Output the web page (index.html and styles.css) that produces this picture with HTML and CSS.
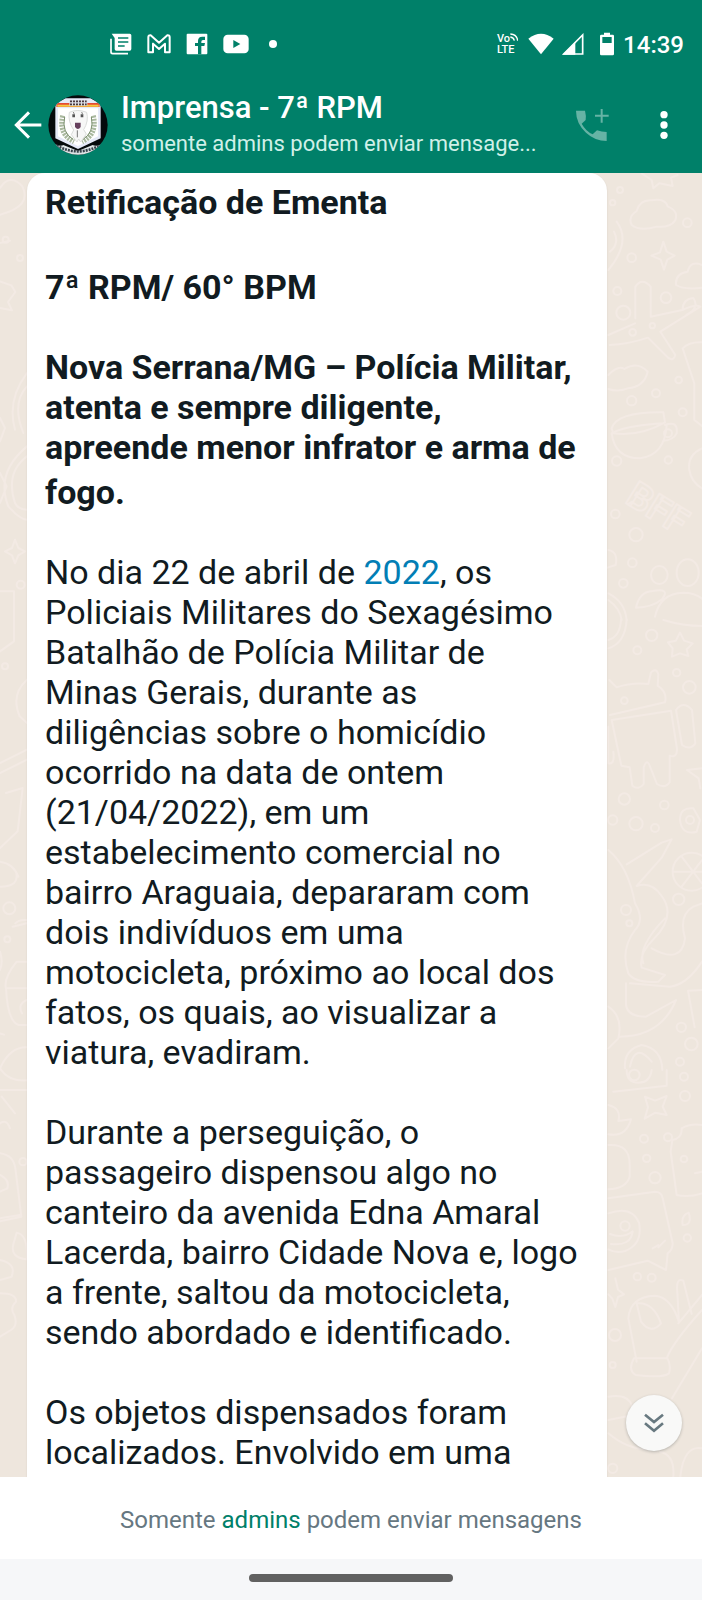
FILE: index.html
```html
<!DOCTYPE html>
<html lang="pt-BR">
<head>
<meta charset="utf-8">
<meta name="viewport" content="width=device-width, initial-scale=1">
<title>Imprensa - 7ª RPM</title>
<link rel="stylesheet" href="styles.css">
</head>
<body>
<header class="header">
  <div class="status">
    <div class="status-left">
      <svg width="22" height="22" viewBox="0 0 66 66" aria-hidden="true"><path d="M5 2h54q5 0 5 5v41q0 5-5 5H19q-5 0-5-5V15z" fill="#fff"/><path d="M24 15h31M24 27h31M24 39h20" stroke="#008069" stroke-width="5"/><path d="M3 17v40q0 5 5 5h46" fill="none" stroke="#fff" stroke-width="5"/></svg>
      <svg width="24" height="20" viewBox="0 0 72 60" aria-hidden="true"><path d="M4 55V9q0-6 7-5l25 22L61 4q7-1 7 5v46H54V29L36 45 18 29v26z" fill="none" stroke="#fff" stroke-width="6" stroke-linejoin="round"/></svg>
      <svg width="22" height="22" viewBox="0 0 66 66" aria-hidden="true"><rect x="2" y="2" width="62" height="62" rx="3" fill="#fff"/><path d="M36 64V39h-9v-9h9v-6q0-13 13-13h8v10h-6q-5 0-5 5v4h11l-2 9h-9v25z" fill="#008069"/></svg>
      <svg width="26" height="20" viewBox="0 0 78 60" aria-hidden="true"><rect x="1" y="2" width="76" height="56" rx="13" fill="#fff"/><path d="M31 18v24l21-12z" fill="#008069"/></svg>
      <svg class="more-dot" width="8" height="8" viewBox="0 0 8 8" aria-hidden="true"><circle cx="4" cy="4" r="4" fill="#fff"/></svg>
    </div>
    <div class="status-right">
      <div class="volte"><span>Vo<svg width="8" height="8" viewBox="0 0 24 24" aria-hidden="true"><path d="M1 3q20 1 22 20M1 12q10 1 12 11" fill="none" stroke="#fff" stroke-width="4"/></svg></span><span>LTE</span></div>
      <svg class="wifi" width="26" height="22" viewBox="0 0 78 66" aria-hidden="true"><path d="M1 17Q39-13 77 17L39 64z" fill="#fff"/></svg>
      <svg class="signal" width="22" height="22" viewBox="0 0 66 66" aria-hidden="true"><path d="M5 63L62 6v57z" fill="none" stroke="#fff" stroke-width="5"/><path d="M2 65l38-38v38z" fill="#fff"/></svg>
      <svg class="battery" width="16" height="24" viewBox="0 0 48 72" aria-hidden="true"><path d="M15 2h18v6h8q4 0 4 4v54q0 4-4 4H7q-4 0-4-4V12q0-4 4-4h8z" fill="#fff"/><path d="M10 15h28v18H10z" fill="#008069"/></svg>
      <time class="clock">14:39</time>
    </div>
  </div>
  <div class="appbar">
    <button class="icon-button back" aria-label="Voltar"><svg width="28" height="28" viewBox="0 0 84 84" aria-hidden="true"><path d="M82 42H7M45 4L7 42l38 38" fill="none" stroke="#fff" stroke-width="9"/></svg></button>
    <svg class="avatar" width="60" height="60" viewBox="0 0 180 180" role="img" aria-label="Brasão da 7ª RPM">
      <defs><clipPath id="round"><circle cx="90" cy="90" r="89"/></clipPath></defs>
      <g clip-path="url(#round)">
        <path d="M0 0h180v180H0z" fill="#050a0c"/>
        <path d="M8 142q28 15 38 8l44 18 44-18q13 7 38-8v38H8z" fill="#dfe5e7"/>
        <path d="M26 152q64 34 128 0" fill="none" stroke="#39434c" stroke-width="8" stroke-dasharray="6 3"/>
        <path d="M22 22q12 0 30-12h76q18 12 30 12v108l-68 32-68-32z" fill="#e5e9f7"/>
        <path d="M30 40h120v84l-60 29-60-29z" fill="#fff"/>
        <path d="M25 24h130v12H25z" fill="#e54a35"/><path d="M28 29h124v6H28z" fill="#f5c840"/>
        <path d="M64 15h54v17H64z" fill="#dbdde4"/><path d="M66 19h50M66 28h50" stroke="#4a3840" stroke-width="5" stroke-dasharray="6 3"/>
        <path d="M44 62q-13 56 34 78M136 62q13 56-34 78" fill="none" stroke="#a9b89e" stroke-width="15" stroke-dasharray="6 3"/>
        <path d="M50 66q-10 46 26 68M130 66q10 46-26 68" fill="none" stroke="#7c9070" stroke-width="3"/>
        <path d="M64 52q-5 27 13 53l-7 14 17 22 5-9 6 9 17-24-8-13q16-26 9-52-27-11-52 0z" fill="#f7f7f7" stroke="#dadcda" stroke-width="3"/>
        <path d="M73 58h8v9h-8zM98 58h8v9h-8z" fill="#555"/><path d="M76 51l3 7M101 51l3 7" stroke="#888" stroke-width="3"/>
        <path d="M81 83h17v13q-8 12-17 0z" fill="#66405d"/><path d="M88 106v21" stroke="#777" stroke-width="3"/>
      </g>
    </svg>
    <div class="heading">
      <h1 class="group-name">Imprensa - 7ª RPM</h1>
      <p class="group-info">somente admins podem enviar mensage...</p>
    </div>
    <button class="icon-button call" aria-label="Ligar para o grupo" disabled><svg width="34" height="34" viewBox="0 0 102 102" aria-hidden="true"><path d="M3 8h27q4 16 2 28L20 47q12 22 33 32l13-12q14 5 29 5v27Q60 99 33 74 3 46 3 8z" fill="#66b3a5"/><path d="M80 3v41M60 23h41" stroke="#66b3a5" stroke-width="6"/></svg></button>
    <button class="icon-button menu" aria-label="Mais opções"><svg width="8" height="30" viewBox="0 0 24 90" aria-hidden="true"><g fill="#fff"><circle cx="12" cy="14" r="11"/><circle cx="12" cy="45" r="11"/><circle cx="12" cy="76" r="11"/></g></svg></button>
  </div>
</header>
<main class="chat">
  <svg class="doodles doodles-left" width="27" height="1308" viewBox="0 0 81 3924" aria-hidden="true">
    <path d="M0 45q30-45 67-5 30 60-67 85M0 210l30-7M0 325l34 12 12 20-22 30 12 25-36-7M81 600Q20 680 45 770M81 640Q34 690 70 780M81 820Q-15 900 25 1000 60 1040 81 1040M81 850Q15 900 45 990 55 1010 81 1010M0 735l15 30-15 40M0 900l20 40-20 50M45 1100l10 25 20 10-20 12-10 24-9-24-21-12 21-10zM0 1255h42v150l-42 30M81 1520q-50 45-22 110l22 20M0 1770l81-40M0 1800l81-40M18 1860l50-15-15 130-53 50"/>
    <circle cx="17" cy="200" r="9"/><circle cx="60" cy="255" r="9"/><circle cx="62" cy="1235" r="12"/><circle cx="15" cy="1480" r="9"/>
    <g transform="translate(0 2061)">
      <path d="M0 5q40 5 55 45M0 80q60 0 48-45M46 190q10-12 34-10M38 200l42-10M0 275q10 30 0 55M81 305H50q-40 50-32 80h63M18 385q5 100 38 110h25M81 420q-30 12-15 40M81 562Q30 560 0 625q25 40 81 36M0 520l12 4M0 690h81M5 710l40 50M0 790q20-15 30 15M0 880q40 5 46 45l18 145-64 14M0 1075l60-10M0 945q30 15 22 40l-22 10M50 1118q35 5 30 80-50-5-40-45zM0 1200q50 10 35 50l-35 10M0 1300q50 0 48 25-20 20-5 40 12 30-10 45l-33 20"/>
      <circle cx="28" cy="145" r="18"/><circle cx="22" cy="238" r="9"/><circle cx="69" cy="905" r="11"/>
    </g>
  </svg>
  <svg class="doodles doodles-right" width="102" height="1308" viewBox="0 0 306 3924" aria-hidden="true">
    <g transform="translate(0 -9)">
      <path d="M125 10l30 20 5 25 18-15 40 8-5-25 20-8M95 165q-12-25 15-42 10-35 45-32 40-8 48 18 35 15 22 43-15 22-55 18-50 15-75-5zM50 155q45 60-25 145M42 185q18 35-12 60M190 215l10 30 24 12-22 12-10 30-10-30-28-12 26-10zM306 285q-35-15-43 20-38 5-35 40 25 15 78 8M106 445V350q20-30 46 0v90l95-20q40-18 54-10l-120 75 45 70q-5 20-22 8l-60-60q-60 20-115 22M25 495l80-35M248 418q0-30 32-34 20 30-20 50M25 615q30-30 48-18 40-25 70 8-10 45-60 50-30 12-58 2M248 535l35 105v110l23 18M248 535q20-20 58-18M35 775q15-50 155-48l5 30Q120 800 40 790zM35 790q10 75 85 75 75-10 80-100M45 785q50-20 145-25M195 765q40-15 35 25-10 20-40 22M306 835q-45 20-38 65 5 35 38 55M25 1140q30 5 22 45l-25 8M108 1313q10-48 50-50 55-10 28 25-30 25-78 25zM165 1340q15-70 85-72 35 0 56 18M25 1270q50 25 55 80M25 1290q35 25 40 60"/>
      <ellipse cx="263" cy="1208" rx="33" ry="40"/><ellipse cx="178" cy="1215" rx="25" ry="27"/>
      <circle cx="60" cy="60" r="9"/><circle cx="38" cy="98" r="8"/><circle cx="262" cy="158" r="13"/><circle cx="95" cy="263" r="13"/><circle cx="52" cy="363" r="12"/><circle cx="70" cy="428" r="21"/><circle cx="198" cy="383" r="16"/><circle cx="98" cy="487" r="10"/><circle cx="157" cy="467" r="8"/><circle cx="236" cy="630" r="10"/><circle cx="168" cy="670" r="12"/><circle cx="95" cy="692" r="14"/><circle cx="248" cy="727" r="12"/><circle cx="204" cy="790" r="12"/><circle cx="50" cy="873" r="14"/><circle cx="205" cy="870" r="11"/><circle cx="46" cy="1032" r="13"/><circle cx="108" cy="1094" r="20"/><circle cx="97" cy="1178" r="13"/><circle cx="70" cy="1240" r="13"/>
      <text class="doodle-word" x="72" y="996" transform="rotate(32 72 996)">BFF</text>
    </g>
    <g transform="translate(0 1341)">
      <path d="M25 85q50-15 55-85M25 60q35-10 38-60M190 0q60 18 116 18M240 38l12 24 26 8-18 18 5 20-25-8-24 10 2-25-14-18 24-5zM28 180l22 22q45-15 95-10l8-35q15-15 22 5l-2 35q30 20 22 50L30 285M35 300l178-28 18 115q0 28-22 20v80q-15 20-38 5l-20-50q-10-30-20 0v50q-15 20-34 5l-8-55-25-5zM228 270q22-30 48 0l10 100q-15 22-40 5zM25 320v110q20 5 15-35M306 445l-45 5 35 25 5 30M240 600q0-40 40-35l20 35-10 35q-45 12-50-35zM25 690q60 50 80 160 30 50 0 80-45 60-20 130 20 30 90 25l20-20-70-22q-10-40 35-85 70-70 25-130-30-45-75-30l75-85 30-55-30 10-105 65M78 1090v65q5 35 60 35l90-50q-45 110-170 110M90 1090l120 10q50-5 96-75M155 985q90 50 100-30-20-70 25-95l26-10M130 1030q-18-50 65-135M306 1110l-42 2 20 110M25 1160q45 30 30 95l-30 30M75 1345q-5-55 50-70 60 10 62 75M90 1340q15-75 65-15"/>
      <circle cx="275" cy="755" r="57"/><path d="M220 755h86M245 710l61 80M245 800l61-80"/>
      <circle cx="155" cy="46" r="17"/><circle cx="112" cy="91" r="12"/><circle cx="230" cy="158" r="11"/><circle cx="268" cy="202" r="19"/><circle cx="73" cy="242" r="10"/><circle cx="73" cy="537" r="17"/><circle cx="193" cy="555" r="13"/><circle cx="108" cy="611" r="20"/><circle cx="165" cy="624" r="12"/><circle cx="270" cy="600" r="12"/><circle cx="38" cy="600" r="14"/><circle cx="236" cy="838" r="17"/><circle cx="78" cy="870" r="15"/><circle cx="88" cy="910" r="9"/><circle cx="244" cy="1222" r="14"/><circle cx="274" cy="1272" r="19"/><circle cx="240" cy="1325" r="12"/>
    </g>
    <g transform="translate(0 2691)">
      <path d="M40 65l160-18V0M80 0q0 38 35 38T155 0M135 80l30 12 35-14-12 32 12 25-34-7-32 18 10-34zM25 105q40 10 30 48l38-5q-15 55-68 45M25 225q65-5 64 60v35q-10 35-64 38M212 245l5-35q30-5 28-35 25-15 61-10M212 245l18 130q35 8 76-5M285 310l21-5M25 385l140-20q20 0 23 20l30 135q0 20-15 30l-5 50-55-28-118 28M25 430q70-25 92 28 12 65-42 85-25 8-50-5M30 492q40 15 68-8-5 45-65 38M158 535l17-10M175 532l20-20M248 465q-5-30 18-37 12 38-18 37zM46 625l8 34 18 14-18 8-8 30-9-25-12-13M110 875l-25-130q5-65 80-68 50 5 72 80l-5-90q-5-45 18-35l25 100M110 700q50-5 73 60-30 35-60-5zM200 865q20-50 106-145M102 865h100q12 20 5 45-20 15-100 5-25-15-5-50zM306 835l-90 150M235 760l71-85M25 980q60-10 72 30M25 1050l75-15M25 1090q70 60 150 45M306 1135q-55-10-65 85M180 1145q45 10 40 75"/>
      <circle cx="103" cy="15" r="16"/><circle cx="252" cy="20" r="12"/><circle cx="255" cy="78" r="15"/><circle cx="132" cy="206" r="12"/><circle cx="204" cy="202" r="12"/><circle cx="140" cy="265" r="11"/><circle cx="165" cy="323" r="17"/><circle cx="75" cy="468" r="14"/><circle cx="262" cy="504" r="11"/><circle cx="112" cy="620" r="11"/><circle cx="155" cy="623" r="12"/><circle cx="45" cy="795" r="18"/><circle cx="38" cy="885" r="9"/><circle cx="252" cy="267" r="10"/><circle cx="38" cy="1195" r="14"/>
    </g>
  </svg>
  <article class="bubble">
    <h2 class="message-title">Retificação de Ementa</h2>
    <p class="strong">7ª RPM/ 60° BPM</p>
    <p class="strong lead">Nova Serrana/MG – Polícia Militar, atenta e sempre diligente, apreende menor infrator e arma de <span class="tall">fogo.</span></p>
    <p>No dia 22 de abril de <a href="#">2022</a>, os Policiais Militares do Sexagésimo Batalhão de Polícia Militar de Minas Gerais, durante as diligências sobre o homicídio ocorrido na data de ontem (21/04/2022), em um estabelecimento comercial no bairro Araguaia, depararam com dois indivíduos em uma motocicleta, próximo ao local dos fatos, os quais, ao visualizar a viatura, evadiram.</p>
    <p>Durante a perseguição, o passageiro dispensou algo no canteiro da avenida Edna Amaral Lacerda, bairro Cidade Nova e, logo a frente, saltou da motocicleta, sendo abordado e identificado.</p>
    <p>Os objetos dispensados foram localizados. Envolvido em uma</p>
  </article>
  <button class="scroll-down" aria-label="Ir para o fim"><svg width="20" height="20" viewBox="0 0 60 60" aria-hidden="true"><path d="M3 5l27 22L57 5M3 31l27 22 27-22" fill="none" stroke="#687980" stroke-width="8"/></svg></button>
</main>
<footer class="footer">
  <p class="notice">Somente <a href="#">admins</a> podem enviar mensagens</p>
  <div class="navbar"><div class="handle"></div></div>
</footer>
</body>
</html>
```
FILE: styles.css
```css
* { box-sizing: border-box; }
body {
  margin: 0;
  min-height: 100vh;
  display: flex;
  flex-direction: column;
  font-family: Roboto, "Liberation Sans", sans-serif;
  background: #fff;
  color: #111b21;
}
h1, h2, p { margin: 0; }
button { border: 0; padding: 0; background: none; }
svg { display: block; flex: none; }
a { text-decoration: none; }

.header { background: #008069; color: #fff; }
.status {
  height: 76px;
  padding: 12px 18px 0 110px;
  display: flex;
  align-items: center;
  justify-content: space-between;
}
.status-left { display: flex; align-items: center; gap: 15px; }
.more-dot { margin-left: 5px; }
.status-right { display: flex; align-items: center; }
.volte { font-size: 11px; line-height: 11px; font-weight: 500; }
.volte span { display: flex; }
.wifi { margin-left: 10px; }
.signal { margin-left: 8px; }
.battery { margin-left: 15px; }
.clock { margin-left: 8px; padding-top: 2px; font-size: 24px; line-height: 28px; font-weight: 500; }

.appbar {
  height: 97px;
  padding: 0 34px 0 14px;
  display: flex;
  align-items: center;
}
.icon-button { display: flex; flex: none; }
.avatar { margin-left: 6px; }
.heading { flex: 1; min-width: 0; margin-left: 13px; }
.group-name { font-size: 31px; line-height: 36px; font-weight: 500; }
.group-info {
  padding-top: 2px;
  font-size: 22px;
  line-height: 32px;
  color: #d0f0e8;
  white-space: nowrap;
}
.call { margin: 0 51px 0 16px; }

.chat {
  position: relative;
  flex: 1;
  overflow: hidden;
  padding: 0 95px 0 27px;
  display: flex;
  background: #eee6dd;
}
.doodles {
  position: absolute;
  top: 0;
  fill: none;
  stroke: #f3eae4;
  stroke-width: 6;
  stroke-linejoin: round;
  stroke-linecap: round;
}
.doodles-left { left: 0; }
.doodles-right { right: 0; }
.doodle-word { font: 700 110px Roboto, sans-serif; }
.bubble {
  position: relative;
  flex: 1;
  padding: 9px 26px 4px 18px;
  display: flex;
  flex-direction: column;
  gap: 40px;
  border-radius: 18px 18px 0 0;
  background: #fff;
  box-shadow: 0 1px 2px rgba(17, 27, 33, 0.1);
  font-size: 34px;
  line-height: 40px;
}
.bubble a { color: #027eb5; }
.message-title { font-size: 34px; line-height: 40px; font-weight: 700; margin-bottom: 5px; }
.strong { font-weight: 700; }
.lead { margin-bottom: -5px; }
.tall { line-height: 50px; }
.scroll-down {
  position: absolute;
  right: 20px;
  bottom: 26px;
  width: 56px;
  height: 56px;
  display: flex;
  align-items: center;
  justify-content: center;
  border-radius: 50%;
  background: #f9f9f8;
  box-shadow: 0 1px 3px rgba(17, 27, 33, 0.25);
}

.notice {
  padding: 27px 16px 23px;
  text-align: center;
  font-size: 24px;
  line-height: 32px;
  color: #667781;
}
.notice a { color: #008069; }
.navbar { height: 41px; padding-top: 15px; background: #f6f7f9; }
.handle { width: 29%; height: 8px; margin: 0 auto; border-radius: 4px; background: #616161; }
```
